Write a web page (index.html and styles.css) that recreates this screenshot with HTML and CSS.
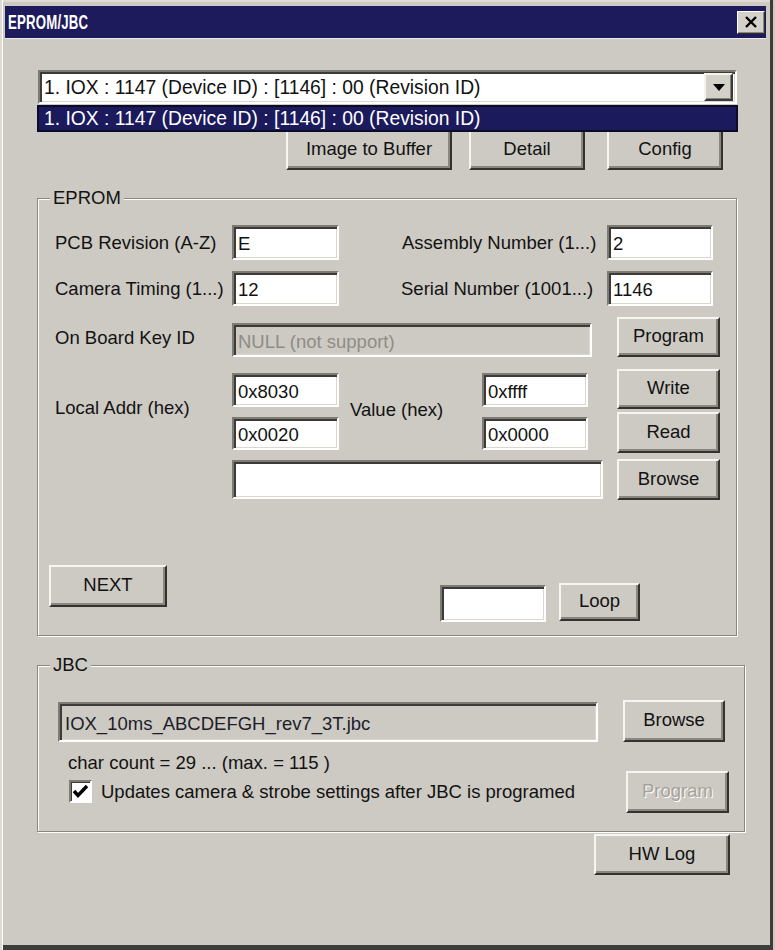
FILE: index.html
```html
<!DOCTYPE html>
<html>
<head>
<meta charset="utf-8">
<title>EPROM/JBC</title>
<link rel="stylesheet" href="styles.css">
</head>
<body>
<div class="window">
  <div class="titlebar">
    <span class="title">EPROM/JBC</span>
    <span class="close">
      <svg width="14" height="14" viewBox="0 0 14 14"><path d="M2 2 L12 12 M12 2 L2 12" stroke="#000" stroke-width="2.4" fill="none"/></svg>
    </span>
  </div>
  <div class="client">
    <div class="combo">
      <span class="combo-text">1. IOX : 1147 (Device ID) : [1146] : 00 (Revision ID)</span>
      <span class="combo-btn"><svg width="12" height="7" viewBox="0 0 12 7"><path d="M0 0 H12 L6 7 Z" fill="#000"/></svg></span>
      <div class="dropdown">1. IOX : 1147 (Device ID) : [1146] : 00 (Revision ID)</div>
    </div>

    <div class="toprow">
      <div class="btn b-image">Image to Buffer</div>
      <div class="btn b-detail">Detail</div>
      <div class="btn b-config">Config</div>
    </div>

    <div class="group eprom">
      <span class="legend">EPROM</span>
      <div class="row row-a">
        <span class="lbl l-left">PCB Revision (A-Z)</span>
        <span class="field f-short">E</span>
        <span class="lbl l-right">Assembly Number (1...)</span>
        <span class="field f-short2">2</span>
      </div>
      <div class="row row-b">
        <span class="lbl l-left">Camera Timing (1...)</span>
        <span class="field f-short">12</span>
        <span class="lbl l-right l-serial">Serial Number (1001...)</span>
        <span class="field f-short2">1146</span>
      </div>
      <div class="row row-c">
        <span class="lbl l-left">On Board Key ID</span>
        <span class="field f-key disabled">NULL (not support)</span>
        <div class="btn b-prog">Program</div>
      </div>
      <div class="row row-d">
        <span class="lbl l-left l-addr">Local Addr (hex)</span>
        <div class="stack s-addr">
          <span class="field f-hex">0x8030</span>
          <span class="field f-hex f-hex2">0x0020</span>
        </div>
        <span class="lbl l-value">Value (hex)</span>
        <div class="stack s-val">
          <span class="field f-hex">0xffff</span>
          <span class="field f-hex f-hex2">0x0000</span>
        </div>
        <div class="stack s-btns">
          <div class="btn b-write">Write</div>
          <div class="btn b-read">Read</div>
        </div>
      </div>
      <div class="row row-e">
        <span class="field f-path"></span>
        <div class="btn b-browse">Browse</div>
      </div>
      <div class="row row-f">
        <div class="btn b-next">NEXT</div>
        <span class="field f-loop"></span>
        <div class="btn b-loop">Loop</div>
      </div>
    </div>

    <div class="group jbc">
      <span class="legend">JBC</span>
      <div class="row row-j1">
        <span class="field f-jbc readonly">IOX_10ms_ABCDEFGH_rev7_3T.jbc</span>
        <div class="btn b-browse2">Browse</div>
      </div>
      <div class="row row-j2">
        <div class="jleft">
          <div class="count">char count = 29 ... (max. = 115 )</div>
          <div class="check-row">
            <span class="checkbox"><svg width="17" height="15" viewBox="0 0 17 15"><path d="M2 7 L6 11.5 L15 2" stroke="#000" stroke-width="3.4" fill="none"/></svg></span>
            <span class="check-text">Updates camera &amp; strobe settings after JBC is programed</span>
          </div>
        </div>
        <div class="btn b-prog2 btn-disabled">Program</div>
      </div>
    </div>

    <div class="bottomrow">
      <div class="btn b-hwlog">HW Log</div>
    </div>
  </div>
</div>
</body>
</html>
```

FILE: styles.css
```css
html, body {
  margin: 0;
  padding: 0;
  background: #cdcac3;
}

.window {
  width: 775px;
  height: 950px;
  box-sizing: border-box;
  background: #cdcac3;
  font-family: "Liberation Sans", Arial, sans-serif;
  font-size: 18.5px;
  color: #121212;
  box-shadow:
    inset 2px 0 0 #dedbd5,
    inset 3px 0 0 #ffffff,
    inset -2px 0 0 #cdcac3,
    inset -5px 0 0 #3e3d3b,
    inset 0 -5px 0 #3e3d3b,
    inset 0 2px 0 #dedbd5;
  padding-top: 6px;
  overflow: hidden;
}

/* Title bar */
.titlebar {
  margin: 0 9px 0 5px;
  height: 32px;
  background: #1d1b5b;
  display: flex;
  align-items: center;
  justify-content: space-between;
  box-shadow: 0 1px 0 #eeece8;
}

.title {
  display: inline-block;
  color: #ffffff;
  font-weight: bold;
  font-size: 20px;
  margin-left: 3px;
  transform: scaleX(0.66);
  transform-origin: left center;
  letter-spacing: 0.3px;
}

.close {
  width: 28px;
  height: 23px;
  box-sizing: border-box;
  margin-right: 1px;
  background: #d4d1ca;
  border: 1px solid;
  border-color: #ffffff #2e2e2e #2e2e2e #ffffff;
  box-shadow: inset -1px -1px 0 #8a877f;
  display: flex;
  align-items: center;
  justify-content: center;
}

.close svg { display: block; }

/* Combo */
.combo {
  position: relative;
  margin: 32px 0 0 38px;
  width: 699px;
  height: 34px;
  box-sizing: border-box;
  background: #ffffff;
  border: 2px solid;
  border-color: #7e7b74 #ffffff #ffffff #7e7b74;
  box-shadow: inset 2px 2px 0 #3c3b39, inset -1px -1px 0 #dad7d0;
  display: flex;
  align-items: center;
}

.combo-text {
  padding-left: 4px;
  padding-top: 2px;
  font-size: 19.3px;
  flex: 1;
  white-space: nowrap;
}

.combo-btn {
  width: 29px;
  height: 28px;
  box-sizing: border-box;
  margin-right: 2px;
  background: #d4d1ca;
  border: 2px solid;
  border-color: #f4f3f0 #3a3938 #3a3938 #f4f3f0;
  box-shadow: inset -1px -1px 0 #858279;
  display: flex;
  align-items: center;
  justify-content: center;
}

.combo-btn svg { display: block; }

.dropdown {
  position: absolute;
  left: -3px;
  top: 33px;
  width: 701px;
  height: 27px;
  box-sizing: border-box;
  background: #1b1a5d;
  border: 2px solid #0b0b28;
  color: #ffffff;
  font-size: 19.3px;
  line-height: 23px;
  padding-left: 5px;
  white-space: nowrap;
  z-index: 2;
}

/* Buttons */
.btn {
  box-sizing: border-box;
  background: #cdcac3;
  border: 2px solid;
  border-color: #f6f5f2 #333230 #333230 #f6f5f2;
  box-shadow: inset -2px -2px 0 #8a877f;
  display: flex;
  align-items: center;
  justify-content: center;
  padding-bottom: 2px;
  white-space: nowrap;
  color: #121212;
}

.btn-disabled {
  color: #a5a29b;
  text-shadow: 1px 1px 0 #ffffff;
}

.toprow {
  display: flex;
  margin-top: 26px;
  height: 40px;
  padding-left: 286px;
}

.b-image { width: 166px; height: 40px; }
.b-detail { width: 116px; height: 40px; margin-left: 17px; }
.b-config { width: 116px; height: 40px; margin-left: 22px; }

/* Group boxes */
.group {
  position: relative;
  box-sizing: border-box;
  margin-left: 37px;
  border: 1px solid #8a877f;
  box-shadow: 1px 1px 0 #ffffff, inset 1px 1px 0 #ffffff;
}

.legend {
  position: absolute;
  left: 12px;
  top: -12px;
  padding: 0 3px;
  background: #cdcac3;
  line-height: 22px;
}

.eprom {
  margin-top: 28px;
  width: 700px;
  height: 438px;
  padding-top: 26px;
}

.row {
  display: flex;
  align-items: center;
}

/* Fields */
.field {
  box-sizing: border-box;
  background: #ffffff;
  border: 2px solid;
  border-color: #7e7b74 #ffffff #ffffff #7e7b74;
  box-shadow: inset 2px 2px 0 #3c3b39, inset -1px -1px 0 #dad7d0;
  padding: 3px 0 0 4px;
  white-space: nowrap;
  display: flex;
  align-items: center;
  color: #121212;
}

.field.disabled {
  background: #cdcac3;
  color: #8f8c86;
}

.field.readonly {
  background: #cdcac3;
  color: #1d1d2a;
}

.lbl { white-space: nowrap; }

.row-a, .row-b, .row-c, .row-d, .row-e { padding-left: 17px; }

.l-left { width: 177px; }
.l-right { margin-left: 63px; width: 205px; }
.l-serial { margin-left: 62px; width: 206px; }

.f-short { width: 107px; height: 35px; }
.f-short2 { width: 106px; height: 35px; }

.row-a { height: 35px; }
.row-b { height: 35px; margin-top: 11px; }

.row-c {
  height: 40px;
  margin-top: 11px;
}
.row-c .l-left { margin-top: 2px; }
.f-key { width: 360px; height: 34px; margin-top: 6px; }
.b-prog { width: 103px; height: 40px; margin-left: 25px; }

.row-d {
  height: 84px;
  margin-top: 12px;
  align-items: flex-start;
}
.l-addr { align-self: center; margin-top: -6px; }
.stack {
  display: flex;
  flex-direction: column;
}
.s-addr { width: 107px; margin-top: 4px; }
.s-val { width: 106px; margin-top: 4px; }
.f-hex { height: 34px; width: 100%; }
.f-hex2 { height: 33px; margin-top: 10px; }
.l-value {
  align-self: center;
  margin-left: 11px;
  width: 132px;
  margin-top: -3px;
}
.s-btns { margin-left: 29px; width: 103px; }
.b-write { height: 40px; }
.b-read { height: 41px; margin-top: 3px; }

.row-e {
  height: 41px;
  margin-top: 6px;
}
.f-path { width: 371px; height: 39px; margin-left: 177px; }
.b-browse { width: 103px; height: 41px; margin-left: 14px; }

.row-f {
  margin-top: 65px;
  padding-left: 11px;
  align-items: flex-start;
}
.b-next { width: 118px; height: 42px; }
.f-loop { width: 106px; height: 37px; margin-left: 273px; margin-top: 20px; }
.b-loop { width: 81px; height: 38px; margin-left: 13px; margin-top: 18px; }

/* JBC */
.jbc {
  margin-top: 29px;
  width: 708px;
  height: 167px;
  padding-top: 34px;
}

.row-j1 {
  align-items: flex-start;
  padding-left: 20px;
}
.f-jbc { width: 540px; height: 40px; margin-top: 2px; padding-left: 5px; }
.b-browse2 { width: 102px; height: 42px; margin-left: 25px; }

.row-j2 {
  margin-top: 10px;
  align-items: flex-start;
  padding-left: 30px;
}

.jleft { width: 558px; }
.count { line-height: 22px; height: 22px; }
.check-row {
  display: flex;
  align-items: center;
  margin-top: 6px;
  height: 23px;
}
.checkbox {
  width: 23px;
  height: 23px;
  box-sizing: border-box;
  margin-left: 1px;
  background: #ffffff;
  border: 2px solid;
  border-color: #7e7b74 #ffffff #ffffff #7e7b74;
  box-shadow: inset 1px 1px 0 #3c3b39;
  display: flex;
  align-items: center;
  justify-content: center;
}
.checkbox svg { display: block; }
.check-text { margin-left: 9px; }

.b-prog2 { width: 103px; height: 42px; margin-top: 19px; }

.bottomrow {
  display: flex;
  padding-left: 594px;
  margin-top: 2px;
}
.b-hwlog { width: 136px; height: 41px; }
```
